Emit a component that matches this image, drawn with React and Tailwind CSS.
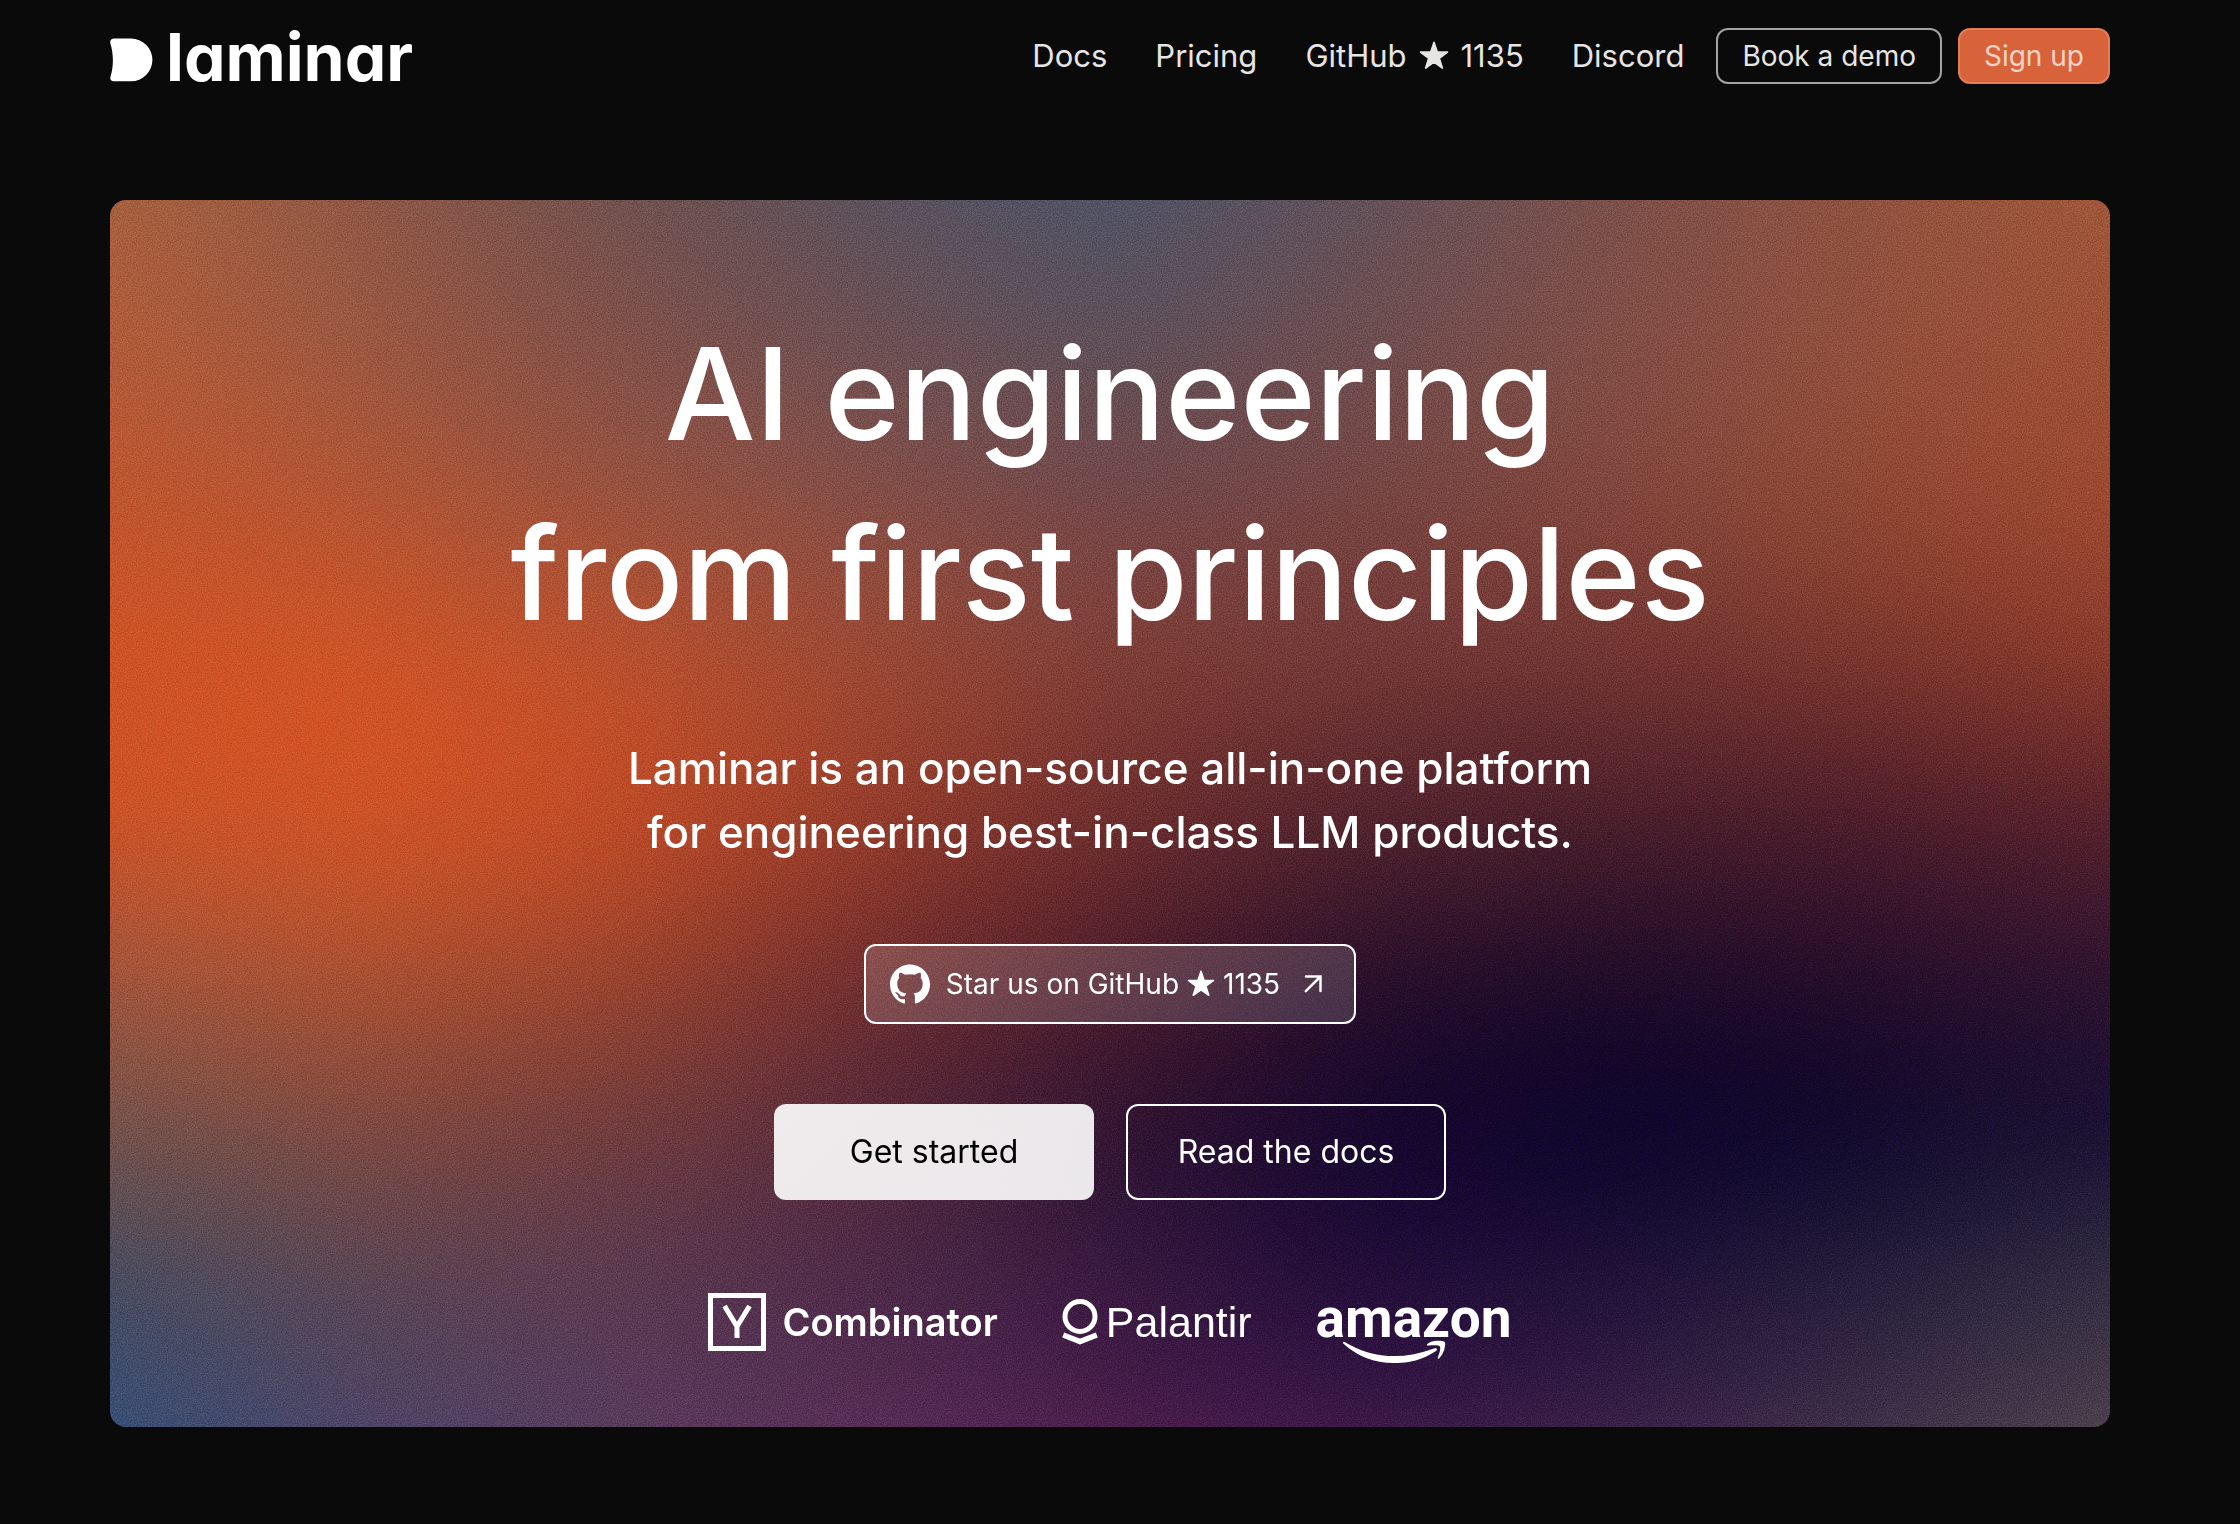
import React from "react";
import { SiGithub } from "react-icons/si";

// Rows of the mesh gradient, top to bottom. Each row fades in over the one above it.
const MESH_ROWS = [
  "bg-[linear-gradient(to_right,#a8623f,#8e5846,#705250,#5a525e,#4c5368,#60525c,#7b504b,#8f5340,#a2583a)]",
  "bg-[linear-gradient(to_right,#b55c38,#9c5841,#835048,#6f5053,#5f505a,#704e50,#824e46,#934f3d,#9e5034)]",
  "bg-[linear-gradient(to_right,#c2562e,#b55532,#9b533e,#874e46,#744749,#764441,#82463c,#904832,#a04830)]",
  "bg-[linear-gradient(to_right,#d05324,#d35424,#bf502b,#a04a32,#823e36,#763835,#733431,#7c352c,#8c3b2a)]",
  "bg-[linear-gradient(to_right,#ce5326,#d45424,#c74c25,#9c3e29,#702e2d,#55242c,#4c1f2a,#4c1c2a,#5a222b)]",
  "bg-[linear-gradient(to_right,#a4563c,#b05230,#a0452c,#742e2d,#4f1d2a,#280f2a,#1e0b28,#260d2a,#301430)]",
  "bg-[linear-gradient(to_right,#76544c,#82493f,#733d3c,#582a3a,#2e1230,#12052c,#080229,#0a0529,#180f32)]",
  "bg-[linear-gradient(to_right,#464c60,#5a4652,#5a3a50,#4c2a48,#34183e,#1e0b38,#1c0f37,#221c39,#322d42)]",
  "bg-[linear-gradient(to_right,#35507a,#4c446a,#583c60,#5a2e58,#501f4e,#401a4a,#3e2249,#44324b,#50424e)]",
];

const ROW_MASKS = [
  "",
  "[mask-image:linear-gradient(transparent_0%,black_12.5%)]",
  "[mask-image:linear-gradient(transparent_12.5%,black_25%)]",
  "[mask-image:linear-gradient(transparent_25%,black_37.5%)]",
  "[mask-image:linear-gradient(transparent_37.5%,black_50%)]",
  "[mask-image:linear-gradient(transparent_50%,black_62.5%)]",
  "[mask-image:linear-gradient(transparent_62.5%,black_75%)]",
  "[mask-image:linear-gradient(transparent_75%,black_87.5%)]",
  "[mask-image:linear-gradient(transparent_87.5%,black_100%)]",
];

function MeshBackground() {
  return (
    <div aria-hidden="true" className="absolute inset-0 -z-10 overflow-hidden">
      {MESH_ROWS.map((row, i) => (
        <div key={row} className={`absolute inset-0 ${row} ${ROW_MASKS[i]}`} />
      ))}
      <div className="absolute inset-0 backdrop-blur-3xl" />
      <svg className="absolute inset-0 size-full opacity-25 mix-blend-soft-light">
        <filter id="grain" colorInterpolationFilters="sRGB">
          <feTurbulence type="fractalNoise" baseFrequency="0.8" numOctaves="2" stitchTiles="stitch" />
          <feColorMatrix
            type="matrix"
            values="2 0 0 0 -0.5  2 0 0 0 -0.5  2 0 0 0 -0.5  0 0 0 0 1"
          />
        </filter>
        <rect width="100%" height="100%" filter="url(#grain)" />
      </svg>
    </div>
  );
}

function LaminarLogo() {
  return (
    <a href="#" aria-label="laminar" className="flex items-center gap-3 text-white">
      <svg viewBox="0 0 44 44" className="mt-2 size-11" fill="currentColor">
        <path d="M4 0.500H21A21.400 21.400 0 0 1 21 43.300H3.500C1 43.300 -0.400 41 0.500 38.700C3.700 28 3.700 16 0.400 5.500C-0.500 3 1.200 0.500 4 0.500Z" />
      </svg>
      <span className="pt-0.5 font-['Inter',sans-serif] text-[66px] leading-[76px] font-bold [font-feature-settings:'cv11']">
        laminar
      </span>
    </a>
  );
}

function StarIcon({ className }) {
  return (
    <svg viewBox="0 0 28 28" className={className} fill="currentColor" stroke="currentColor" strokeWidth="1.500" strokeLinejoin="round" aria-hidden="true">
      <path d="M14 1.200 17.050 10.300 26.600 10.400 18.950 16.100 21.800 25.300 14 19.800 6.200 25.300 9.050 16.100 1.400 10.400 10.950 10.300Z" />
    </svg>
  );
}

function Header() {
  return (
    <header className="flex h-28 items-center justify-between">
      <LaminarLogo />
      <div className="flex items-center gap-8">
        <nav className="flex items-center gap-12 text-[31px] leading-10 text-[#e7e5e4]">
          <a href="#docs">Docs</a>
          <a href="#pricing">Pricing</a>
          <a href="#github" className="flex items-center gap-3">
            GitHub <StarIcon className="size-[30px]" /> 1135
          </a>
          <a href="#discord">Discord</a>
        </nav>
        <div className="flex items-center gap-4 text-[28px] leading-8">
          <button className="h-14 rounded-xl border-2 border-[#a3a3a3] px-6 text-[#e7e5e4]">Book a demo</button>
          <button className="h-14 rounded-xl border-2 border-[#e17e55] bg-[#d8633a] px-6 text-[#f3d3c5]">Sign up</button>
        </div>
      </div>
    </header>
  );
}

function YCombinator() {
  return (
    <div className="flex items-center gap-4">
      <svg viewBox="0 0 58 58" className="size-[58px]" fill="none" stroke="currentColor" strokeWidth="5">
        <rect x="2.500" y="2.500" width="53" height="53" />
        <path d="M16.500 13 29 33.500 41.500 13M29 32v13" />
      </svg>
      <span className="font-['Inter',sans-serif] text-[38px] leading-[48px] font-semibold">Combinator</span>
    </div>
  );
}

function Palantir() {
  return (
    <div className="flex items-center gap-2">
      <svg viewBox="0 0 36 46" className="h-[46px] w-9" fill="none" stroke="currentColor" strokeWidth="5">
        <circle cx="18" cy="17.500" r="15" />
        <path d="M1.200 36 18 42.500 34.800 36" strokeWidth="5.500" />
      </svg>
      <span className="font-['Liberation_Sans',sans-serif] text-[43px] leading-[48px]">Palantir</span>
    </div>
  );
}

function Amazon() {
  return (
    <div className="relative flex items-center">
      <span className="pb-2 font-['Roboto',sans-serif] text-[55px] leading-[48px] font-bold">amazon</span>
      <svg viewBox="0 0 104 25" className="absolute top-[46px] left-[27px] w-[104px]" fill="currentColor">
        <path d="M1.500 2C30 19 60 20 91 8.500C93.500 7.500 95 9.500 93 11C78 20.500 66 23 51 23C31 23 14 16 0.500 3.800C-0.500 2.600 0.300 1.400 1.500 2Z" />
        <path d="M84 4.500C86 1.500 93 0 99 1C102.500 1.500 102.500 3 102 6C101.500 11 99 15.500 96 18.500C95 19.200 94.300 18.700 94.800 17.600C96 14.500 98 8.500 97 6.500C96 4.700 89 5.200 85.200 5.600C84 5.700 83.500 5.300 84 4.500Z" />
      </svg>
    </div>
  );
}

function Hero() {
  return (
    <section className="relative isolate mt-22 flex flex-col items-center overflow-hidden rounded-2xl px-8 pt-26 pb-[71px] text-center text-white">
      <MeshBackground />
      <h1 className="text-[128px] leading-[180px] font-medium">
        AI engineering
        <br />
        from first principles
      </h1>
      <p className="mt-18 text-[44px] leading-[64px] font-medium">
        Laminar is an open-source all-in-one platform
        <br />
        for engineering best-in-class LLM products.
      </p>
      <button className="mt-20 flex h-20 items-center rounded-xl border-2 border-white bg-white/15 px-6 text-[28px] leading-8">
        <SiGithub className="mr-4 size-10" />
        <span className="flex items-center gap-2">
          Star us on GitHub <StarIcon className="size-7" /> 1135
        </span>
        <svg viewBox="0 0 18 18" className="mr-2 ml-6 size-[18px]" fill="none" stroke="currentColor" strokeWidth="2.500" strokeLinecap="round">
          <path d="M2 1.500H16.500V16M16 2 1.800 16.200" />
        </svg>
      </button>
      <div className="mt-20 flex gap-8 text-[32px] leading-10">
        <button className="h-24 w-80 rounded-xl bg-white/90 text-black">Get started</button>
        <button className="h-24 w-80 rounded-xl border-2 border-white">Read the docs</button>
      </div>
      <div className="mt-22 flex h-[68px] items-center gap-16">
        <YCombinator />
        <Palantir />
        <Amazon />
      </div>
    </section>
  );
}

export default function App() {
  return (
    <div className="min-h-screen bg-[#0a0a0a] pr-[130px] pl-[110px] font-['Inter',sans-serif]">
      <Header />
      <main>
        <Hero />
      </main>
    </div>
  );
}
